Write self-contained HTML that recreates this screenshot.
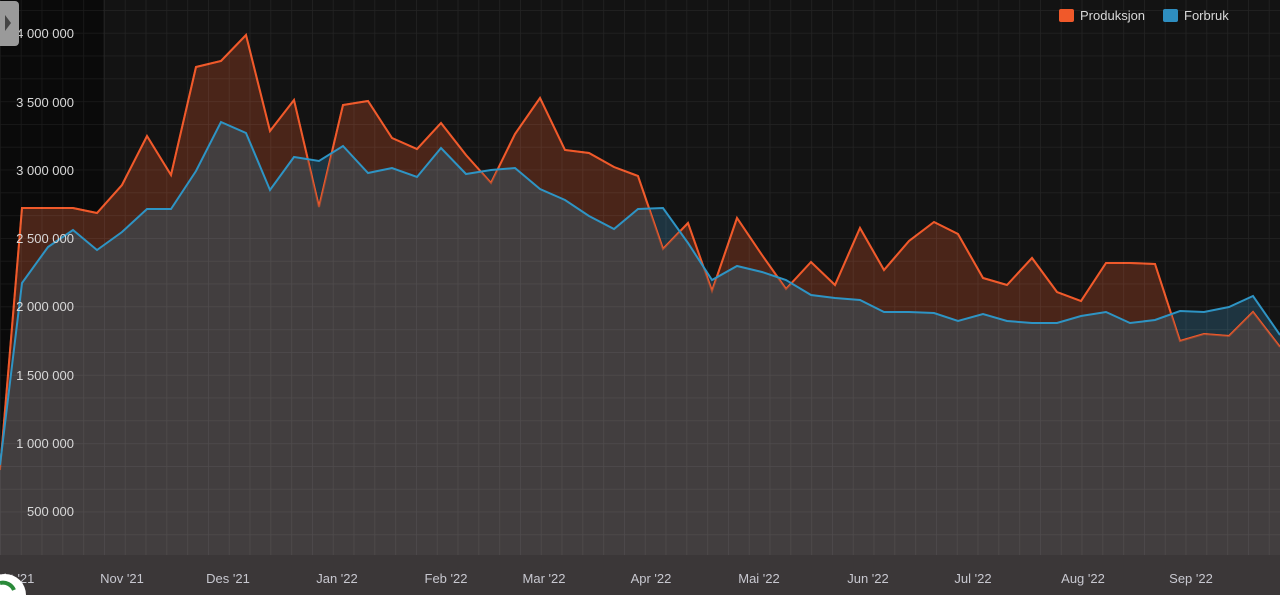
<!DOCTYPE html>
<html><head><meta charset="utf-8"><style>
html,body{margin:0;padding:0;background:#121212;width:1280px;height:595px;overflow:hidden;font-family:"Liberation Sans",sans-serif}
</style></head><body>
<svg width="1280" height="595" xmlns="http://www.w3.org/2000/svg" style="position:absolute;left:0;top:0">
<defs>
<pattern id="g" width="20.8" height="22.8" patternUnits="userSpaceOnUse" x="0" y="10">
<path d="M0 0H20.8M0 0V22.8" stroke="rgba(255,255,255,0.07)" stroke-width="1.5" fill="none"/>
</pattern>
<clipPath id="oc"><polygon points="0,555 0,470 22,208 48,208 73,208 97,213 122,185 147,136 171,175 196,67 221,61 246,35 270,131 294,100 319,207 343,105 368,101 392,138 417,149 441,123 466,155 491,183 515,134 540,98 565,150 589,153 614,167 638,176 663,249 688,223 712,291 737,218 762,255 786,289 811,262 835,285 860,228 884,270 909,241 934,222 958,234 983,278 1007,285 1032,258 1057,292 1081,301 1106,263 1130,263 1155,264 1180,341 1204,334 1229,336 1253,312 1280,347 1280,555"/></clipPath>
</defs>
<rect x="0" y="0" width="103" height="555" fill="#0a0a0a"/>
<rect x="103" y="0" width="1177" height="555" fill="#131313"/>
<polygon points="0,555 0,465 22,283 48,247 73,230 97,250 122,232 147,209 171,209 196,171 221,122 246,133 270,190 294,157 319,161 343,146 368,173 392,168 417,177 441,148 466,174 491,170 515,168 540,189 565,200 589,216 614,229 638,209 663,208 688,243 712,280 737,266 762,272 786,280 811,295 835,298 860,300 884,312 909,312 934,313 958,321 983,314 1007,321 1032,323 1057,323 1081,316 1106,312 1130,323 1155,320 1180,311 1204,312 1229,307 1253,296 1280,335 1280,555" fill="#1e3440"/>
<polygon points="0,555 0,470 22,208 48,208 73,208 97,213 122,185 147,136 171,175 196,67 221,61 246,35 270,131 294,100 319,207 343,105 368,101 392,138 417,149 441,123 466,155 491,183 515,134 540,98 565,150 589,153 614,167 638,176 663,249 688,223 712,291 737,218 762,255 786,289 811,262 835,285 860,228 884,270 909,241 934,222 958,234 983,278 1007,285 1032,258 1057,292 1081,301 1106,263 1130,263 1155,264 1180,341 1204,334 1229,336 1253,312 1280,347 1280,555" fill="#4a2519"/>
<polyline points="0,470 22,208 48,208 73,208 97,213 122,185 147,136 171,175 196,67 221,61 246,35 270,131 294,100 319,207 343,105 368,101 392,138 417,149 441,123 466,155 491,183 515,134 540,98 565,150 589,153 614,167 638,176 663,249 688,223 712,291 737,218 762,255 786,289 811,262 835,285 860,228 884,270 909,241 934,222 958,234 983,278 1007,285 1032,258 1057,292 1081,301 1106,263 1130,263 1155,264 1180,341 1204,334 1229,336 1253,312 1280,347" fill="none" stroke="#f0592a" stroke-width="2"/>
<polygon clip-path="url(#oc)" points="0,555 0,465 22,283 48,247 73,230 97,250 122,232 147,209 171,209 196,171 221,122 246,133 270,190 294,157 319,161 343,146 368,173 392,168 417,177 441,148 466,174 491,170 515,168 540,189 565,200 589,216 614,229 638,209 663,208 688,243 712,280 737,266 762,272 786,280 811,295 835,298 860,300 884,312 909,312 934,313 958,321 983,314 1007,321 1032,323 1057,323 1081,316 1106,312 1130,323 1155,320 1180,311 1204,312 1229,307 1253,296 1280,335 1280,555" fill="#423e3f"/>
<polyline points="0,470 22,208 48,208 73,208 97,213 122,185 147,136 171,175 196,67 221,61 246,35 270,131 294,100 319,207 343,105 368,101 392,138 417,149 441,123 466,155 491,183 515,134 540,98 565,150 589,153 614,167 638,176 663,249 688,223 712,291 737,218 762,255 786,289 811,262 835,285 860,228 884,270 909,241 934,222 958,234 983,278 1007,285 1032,258 1057,292 1081,301 1106,263 1130,263 1155,264 1180,341 1204,334 1229,336 1253,312 1280,347" fill="none" stroke="#f0592a" stroke-width="2" stroke-opacity="0.55"/>
<rect x="0" y="555" width="1280" height="40" fill="#3b3738"/>
<rect x="0" y="0" width="1280" height="555" fill="url(#g)"/>
<polyline points="0,465 22,283 48,247 73,230 97,250 122,232 147,209 171,209 196,171 221,122 246,133 270,190 294,157 319,161 343,146 368,173 392,168 417,177 441,148 466,174 491,170 515,168 540,189 565,200 589,216 614,229 638,209 663,208 688,243 712,280 737,266 762,272 786,280 811,295 835,298 860,300 884,312 909,312 934,313 958,321 983,314 1007,321 1032,323 1057,323 1081,316 1106,312 1130,323 1155,320 1180,311 1204,312 1229,307 1253,296 1280,335" fill="none" stroke="#2e94c4" stroke-width="2"/>
<g fill="#d8d8d8" font-size="13" text-anchor="end">
<text x="74" y="38">4 000 000</text><text x="74" y="107">3 500 000</text><text x="74" y="175">3 000 000</text><text x="74" y="243">2 500 000</text><text x="74" y="311">2 000 000</text><text x="74" y="380">1 500 000</text><text x="74" y="448">1 000 000</text><text x="74" y="516">500 000</text>
</g>
<g fill="#c8c8d0" font-size="13" text-anchor="middle">
<text x="14" y="583">Okt '21</text><text x="122" y="583">Nov '21</text><text x="228" y="583">Des '21</text><text x="337" y="583">Jan '22</text><text x="446" y="583">Feb '22</text><text x="544" y="583">Mar '22</text><text x="651" y="583">Apr '22</text><text x="759" y="583">Mai '22</text><text x="868" y="583">Jun '22</text><text x="973" y="583">Jul '22</text><text x="1083" y="583">Aug '22</text><text x="1191" y="583">Sep '22</text>
</g>
<rect x="-4" y="1" width="23" height="45" rx="4" fill="#9a9a9a"/>
<polygon points="5,15 11,23 5,31" fill="#444"/>
<circle cx="5" cy="595" r="21" fill="#fff"/>
<path d="M0 583 A12 12 0 0 1 14 590" stroke="#2a8a3a" stroke-width="4" fill="none"/>
<rect x="1059" y="9" width="15" height="13" rx="2" fill="#f0592a"/>
<text x="1080" y="20" font-size="13" fill="#d8d8d8">Produksjon</text>
<rect x="1163" y="9" width="15" height="13" rx="2" fill="#2e8ec0"/>
<text x="1184" y="20" font-size="13" fill="#d8d8d8">Forbruk</text>
</svg>
</body></html>
